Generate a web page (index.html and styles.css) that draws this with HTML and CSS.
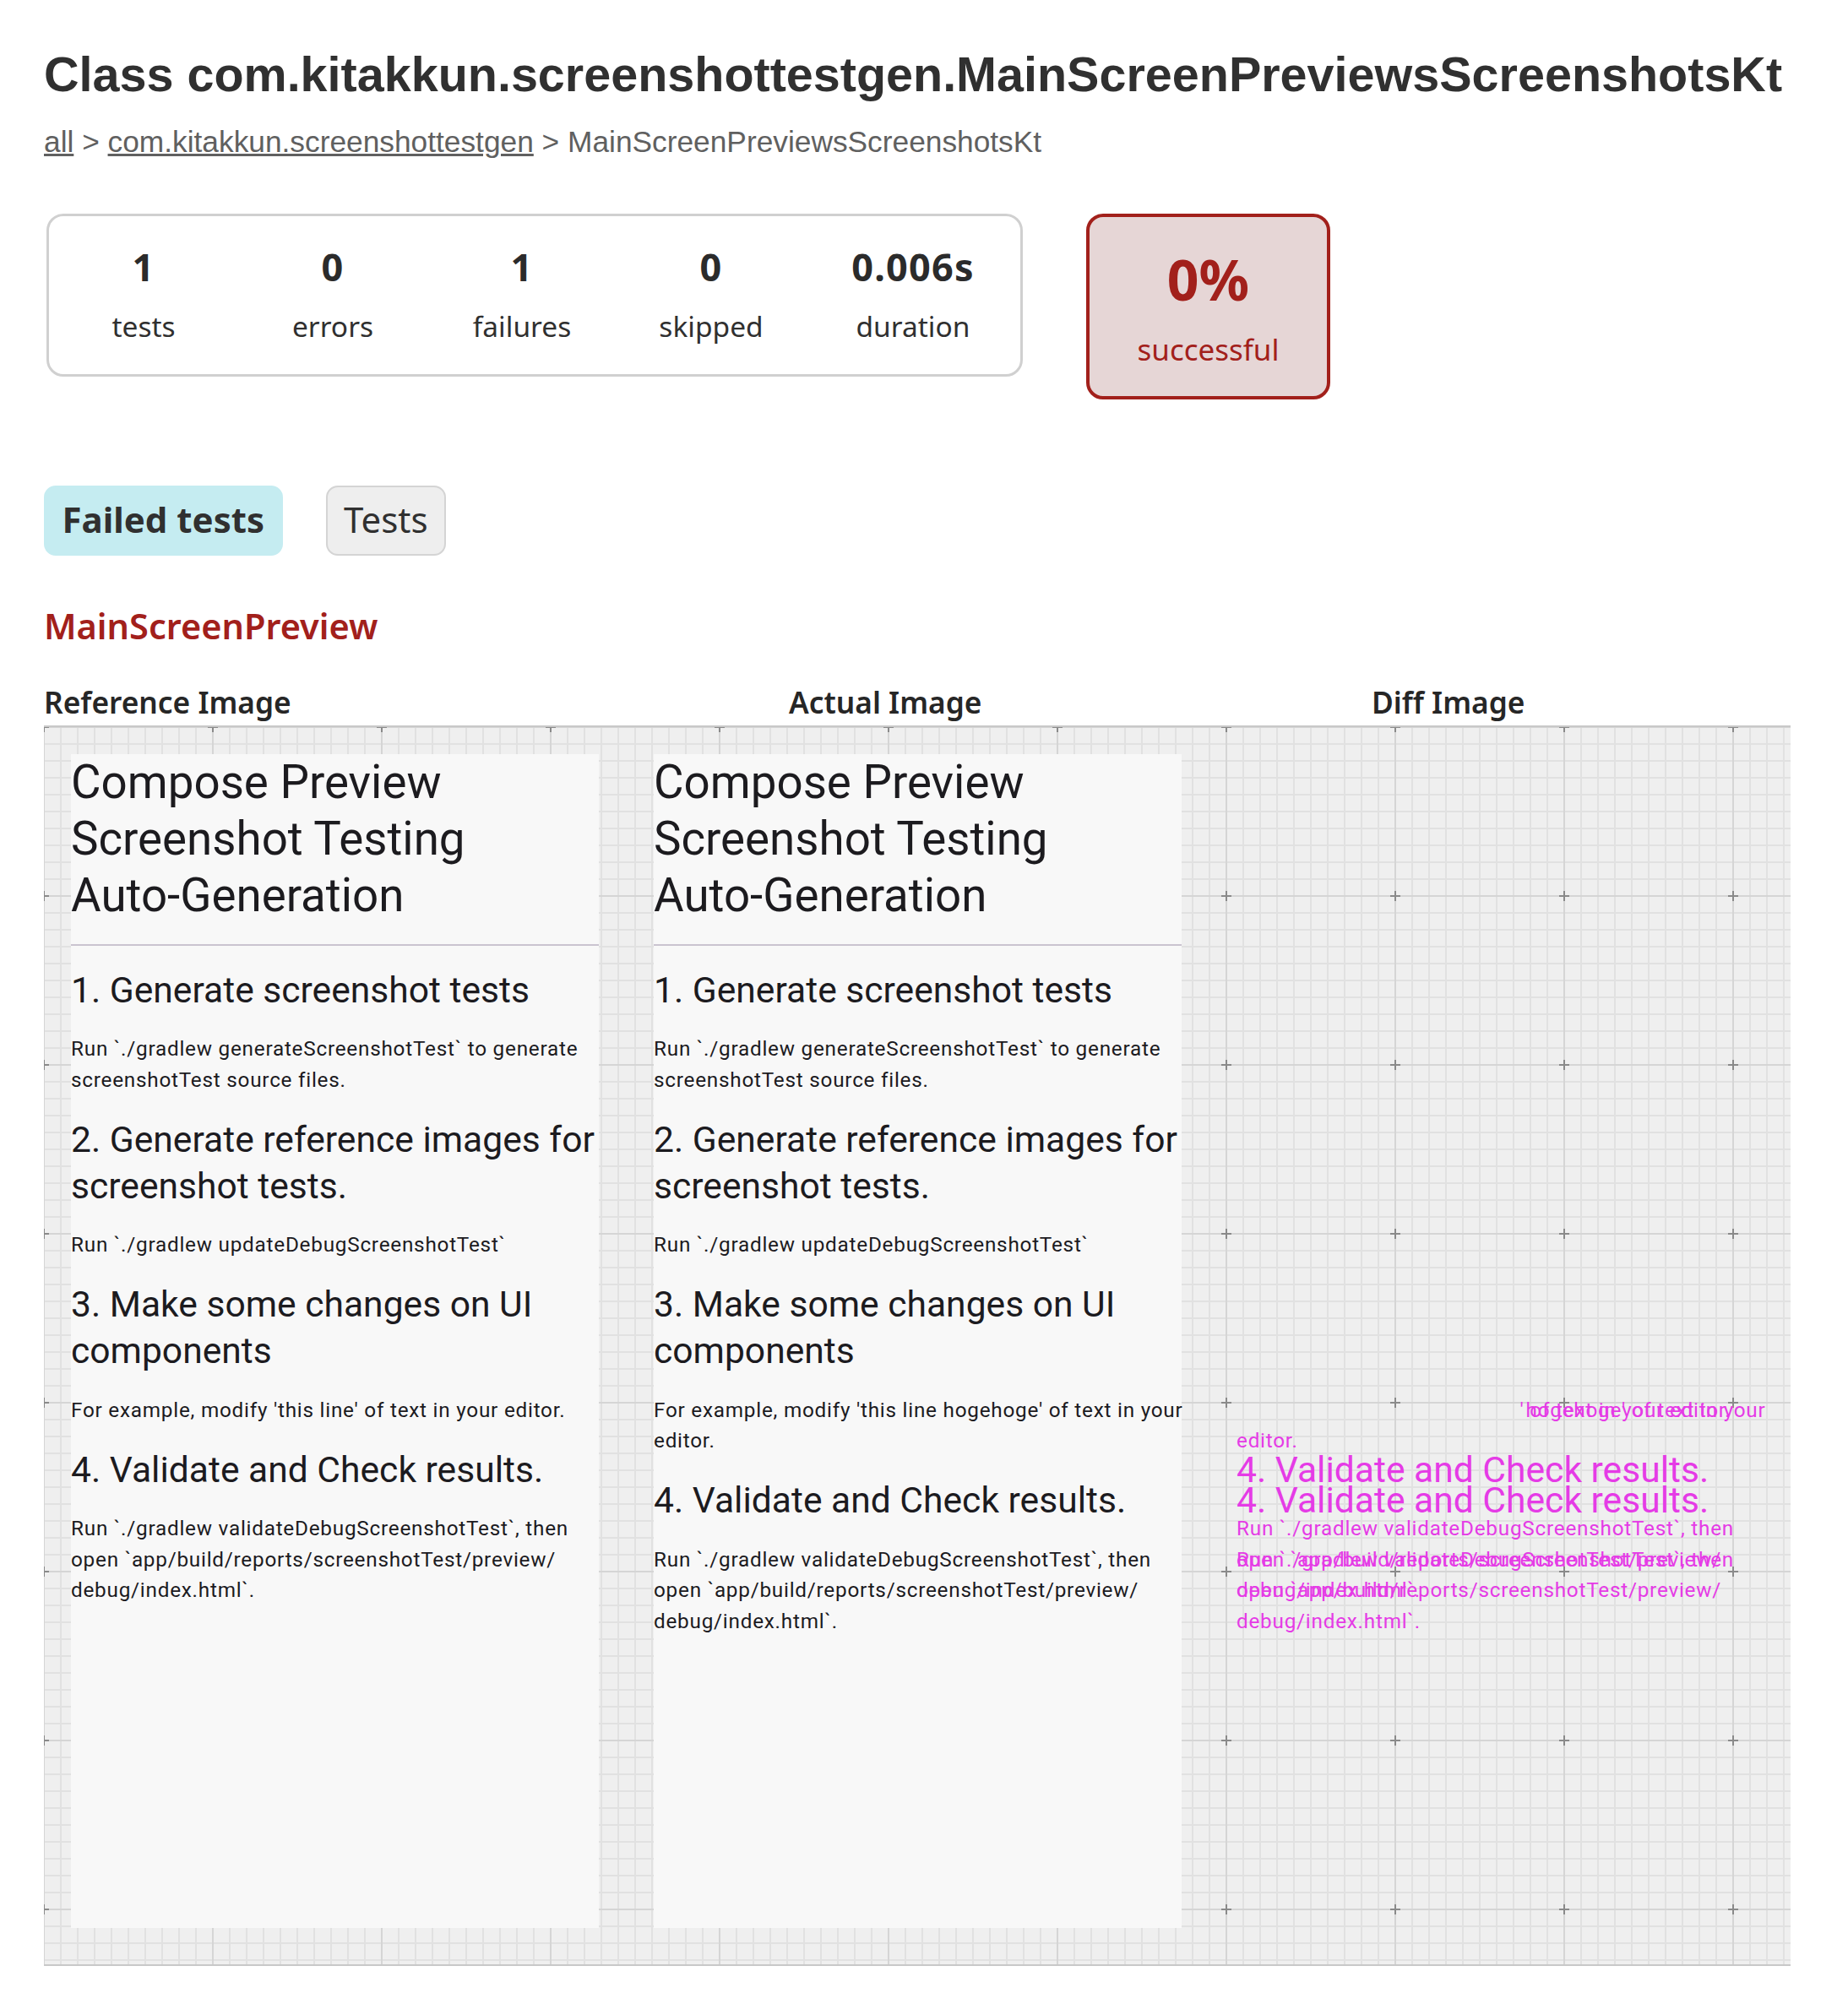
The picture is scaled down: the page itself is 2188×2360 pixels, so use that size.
FILE: index.html
```html
<!DOCTYPE html>
<html lang="en">
<head>
<meta charset="utf-8">
<title>Test results - Class com.kitakkun.screenshottestgen.MainScreenPreviewsScreenshotsKt</title>
<link rel="stylesheet" href="styles.css">
</head>
<body>
<div class="content">
  <h1 class="page-title">Class com.kitakkun.screenshottestgen.MainScreenPreviewsScreenshotsKt</h1>
  <div class="breadcrumbs"><a href="#">all</a> &gt; <a href="#">com.kitakkun.screenshottestgen</a> &gt; MainScreenPreviewsScreenshotsKt</div>

  <div class="summary">
    <div class="summary-group">
      <div class="info-box"><div class="counter">1</div><p class="label">tests</p></div>
      <div class="info-box"><div class="counter">0</div><p class="label">errors</p></div>
      <div class="info-box"><div class="counter">1</div><p class="label">failures</p></div>
      <div class="info-box"><div class="counter">0</div><p class="label">skipped</p></div>
      <div class="info-box info-box--wide"><div class="counter">0.006s</div><p class="label">duration</p></div>
    </div>
    <div class="success-rate">
      <div class="percent">0%</div>
      <p class="label">successful</p>
    </div>
  </div>

  <ul class="tab-links">
    <li class="tab tab--selected">Failed tests</li>
    <li class="tab">Tests</li>
  </ul>

  <h2 class="test-name">MainScreenPreview</h2>

  <div class="compare-heads">
    <div class="compare-head">Reference Image</div>
    <div class="compare-head compare-head--offset">Actual Image</div>
    <div class="compare-head compare-head--offset">Diff Image</div>
  </div>

  <div class="compare-canvas">
    <svg class="grid-bg" aria-hidden="true">
      <defs>
        <pattern id="grid" x="-101" y="-101" width="200" height="200" patternUnits="userSpaceOnUse">
          <rect width="200" height="200" fill="#efefef"/>
          <g fill="#e1e1e1">
            <rect x="0" width="2" height="200"/><rect x="20" width="2" height="200"/><rect x="40" width="2" height="200"/><rect x="60" width="2" height="200"/><rect x="80" width="2" height="200"/>
            <rect x="120" width="2" height="200"/><rect x="140" width="2" height="200"/><rect x="160" width="2" height="200"/><rect x="180" width="2" height="200"/>
            <rect y="0" width="200" height="2"/><rect y="20" width="200" height="2"/><rect y="40" width="200" height="2"/><rect y="60" width="200" height="2"/><rect y="80" width="200" height="2"/>
            <rect y="120" width="200" height="2"/><rect y="140" width="200" height="2"/><rect y="160" width="200" height="2"/><rect y="180" width="200" height="2"/>
          </g>
          <g fill="#d5d5d5">
            <rect x="100" width="2" height="200"/>
            <rect y="100" width="200" height="2"/>
          </g>
          <g fill="#8a8a8a">
            <rect x="95" y="100" width="12" height="2"/>
            <rect x="100" y="95" width="2" height="12"/>
          </g>
        </pattern>
      </defs>
      <rect width="100%" height="100%" fill="url(#grid)"/>
    </svg>

    <div class="panel">
      <div class="shot">
        <p class="shot-title">Compose Preview<br>Screenshot Testing<br>Auto-Generation</p>
        <div class="shot-divider"></div>
        <p class="shot-heading">1. Generate screenshot tests</p>
        <p class="shot-body">Run `./gradlew generateScreenshotTest` to generate<br>screenshotTest source files.</p>
        <p class="shot-heading">2. Generate reference images for<br>screenshot tests.</p>
        <p class="shot-body">Run `./gradlew updateDebugScreenshotTest`</p>
        <p class="shot-heading">3. Make some changes on UI<br>components</p>
        <p class="shot-body">For example, modify 'this line' of text in your editor.</p>
        <p class="shot-heading">4. Validate and Check results.</p>
        <p class="shot-body">Run `./gradlew validateDebugScreenshotTest`, then<br>open `app/build/reports/screenshotTest/preview/<br>debug/index.html`.</p>
      </div>
    </div>

    <div class="panel">
      <div class="shot">
        <p class="shot-title">Compose Preview<br>Screenshot Testing<br>Auto-Generation</p>
        <div class="shot-divider"></div>
        <p class="shot-heading">1. Generate screenshot tests</p>
        <p class="shot-body">Run `./gradlew generateScreenshotTest` to generate<br>screenshotTest source files.</p>
        <p class="shot-heading">2. Generate reference images for<br>screenshot tests.</p>
        <p class="shot-body">Run `./gradlew updateDebugScreenshotTest`</p>
        <p class="shot-heading">3. Make some changes on UI<br>components</p>
        <p class="shot-body">For example, modify 'this line hogehoge' of text in your<br>editor.</p>
        <p class="shot-heading">4. Validate and Check results.</p>
        <p class="shot-body">Run `./gradlew validateDebugScreenshotTest`, then<br>open `app/build/reports/screenshotTest/preview/<br>debug/index.html`.</p>
      </div>
    </div>

    <div class="panel">
      <div class="shot shot--diff">
        <div class="diff-layer">
          <p class="shot-title ghost">Compose Preview<br>Screenshot Testing<br>Auto-Generation</p>
          <div class="shot-divider ghost"></div>
          <p class="shot-heading ghost">1. Generate screenshot tests</p>
          <p class="shot-body ghost">Run `./gradlew generateScreenshotTest` to generate<br>screenshotTest source files.</p>
          <p class="shot-heading ghost">2. Generate reference images for<br>screenshot tests.</p>
          <p class="shot-body ghost">Run `./gradlew updateDebugScreenshotTest`</p>
          <p class="shot-heading ghost">3. Make some changes on UI<br>components</p>
          <p class="shot-body"><span class="ghost">For example, modify 'this line</span>' of text in your editor.</p>
          <p class="shot-heading">4. Validate and Check results.</p>
          <p class="shot-body">Run `./gradlew validateDebugScreenshotTest`, then<br>open `app/build/reports/screenshotTest/preview/<br>debug/index.html`.</p>
        </div>
        <div class="diff-layer">
          <p class="shot-title ghost">Compose Preview<br>Screenshot Testing<br>Auto-Generation</p>
          <div class="shot-divider ghost"></div>
          <p class="shot-heading ghost">1. Generate screenshot tests</p>
          <p class="shot-body ghost">Run `./gradlew generateScreenshotTest` to generate<br>screenshotTest source files.</p>
          <p class="shot-heading ghost">2. Generate reference images for<br>screenshot tests.</p>
          <p class="shot-body ghost">Run `./gradlew updateDebugScreenshotTest`</p>
          <p class="shot-heading ghost">3. Make some changes on UI<br>components</p>
          <p class="shot-body"><span class="ghost">For example, modify 'this line</span> hogehoge' of text in your<br>editor.</p>
          <p class="shot-heading">4. Validate and Check results.</p>
          <p class="shot-body">Run `./gradlew validateDebugScreenshotTest`, then<br>open `app/build/reports/screenshotTest/preview/<br>debug/index.html`.</p>
        </div>
      </div>
    </div>
  </div>
</div>
</body>
</html>
```

FILE: styles.css
```css
html, body {
  margin: 0;
  padding: 0;
  background: #ffffff;
}

body {
  color: #303030;
  font-family: "Noto Sans", "Open Sans", sans-serif;
}

.content {
  padding: 56px 68px 0 52px;
}

.page-title {
  margin: 0;
  font-family: "Liberation Sans", Arial, sans-serif;
  font-weight: 700;
  font-size: 57.5px;
  line-height: 64px;
  white-space: nowrap;
  color: #303030;
}

.breadcrumbs {
  margin-top: 28px;
  font-family: "Liberation Sans", Arial, sans-serif;
  font-size: 35.3px;
  line-height: 40px;
  color: #606060;
  white-space: nowrap;
}

.breadcrumbs a {
  color: #606060;
  text-decoration: underline;
}

/* summary */
.summary {
  display: flex;
  align-items: flex-start;
  margin: 65px 0 0 3px;
}

.summary-group {
  display: flex;
  border: 3px solid #d0d0d0;
  border-radius: 20px;
  padding: 34px 0 37px;
}

.info-box {
  width: 224px;
  text-align: center;
}

.info-box--wide {
  width: 254px;
}

.counter {
  font-weight: 700;
  font-size: 45px;
  line-height: 52px;
  letter-spacing: 1.2px;
  color: #2b2b2b;
}

.label {
  margin: 24px 0 0;
  font-size: 33.5px;
  line-height: 40px;
  color: #303030;
}

.success-rate {
  margin-left: 75px;
  width: 281px;
  border: 4px solid #a2201b;
  border-radius: 20px;
  background: #e6d6d6;
  text-align: center;
  padding: 35px 0 35px;
}

.percent {
  font-weight: 700;
  font-size: 66px;
  line-height: 76px;
  color: #a2201b;
}

.success-rate .label {
  margin-top: 26px;
  font-size: 35px;
  color: #a2201b;
}

/* tabs */
.tab-links {
  display: flex;
  gap: 51px;
  list-style: none;
  margin: 102px 0 0;
  padding: 0;
}

.tab {
  border: 2px solid #d4d4d4;
  border-radius: 14px;
  background: #eeeeee;
  padding: 13px 19.5px 16px;
  font-size: 42px;
  line-height: 50px;
  color: #303030;
}

.tab--selected {
  background: #c5ecf1;
  border-color: #c5ecf1;
  font-weight: 700;
}

.test-name {
  margin: 59px 0 0;
  font-size: 41.5px;
  line-height: 48px;
  font-weight: 600;
  color: #a2201b;
}

/* comparison image */
.compare-heads {
  display: grid;
  grid-template-columns: 690px 690px 1fr;
  margin-top: 46px;
}

.compare-head {
  font-size: 35.3px;
  line-height: 40px;
  font-weight: 600;
  color: #262626;
  white-space: nowrap;
}

.compare-head--offset {
  padding-left: 192px;
}

.compare-canvas {
  position: relative;
  margin-top: 8px;
  height: 1465px;
  border-top: 2px solid #c8c8c8;
  border-bottom: 2px solid #c8c8c8;
  display: grid;
  grid-template-columns: 690px 690px 1fr;
  overflow: hidden;
}

.grid-bg {
  position: absolute;
  left: 0;
  top: 0;
  width: 100%;
  height: 100%;
  z-index: 0;
}

.panel {
  position: relative;
  z-index: 1;
  padding: 32px 0 0 32px;
}

.shot {
  width: 625px;
  height: 1390px;
  background: #f8f8f8;
  font-family: Roboto, "Noto Sans", sans-serif;
  color: #1c1b1f;
  display: flex;
  flex-direction: column;
  gap: 24.7px;
}

.shot p {
  margin: 0;
  white-space: nowrap;
}

.shot-title {
  font-size: 54.7px;
  line-height: 66.9px;
}

.shot-divider {
  height: 2px;
  background: #cac4d0;
}

.shot-heading {
  font-size: 42.6px;
  line-height: 54.7px;
}

.shot-body {
  font-size: 24.3px;
  line-height: 36.5px;
  letter-spacing: 0.76px;
}

.shot--diff {
  background: transparent;
  display: grid;
  color: #e53be6;
}

.diff-layer {
  grid-area: 1 / 1;
  display: flex;
  flex-direction: column;
  gap: 24.7px;
}

.ghost {
  visibility: hidden;
}
```
